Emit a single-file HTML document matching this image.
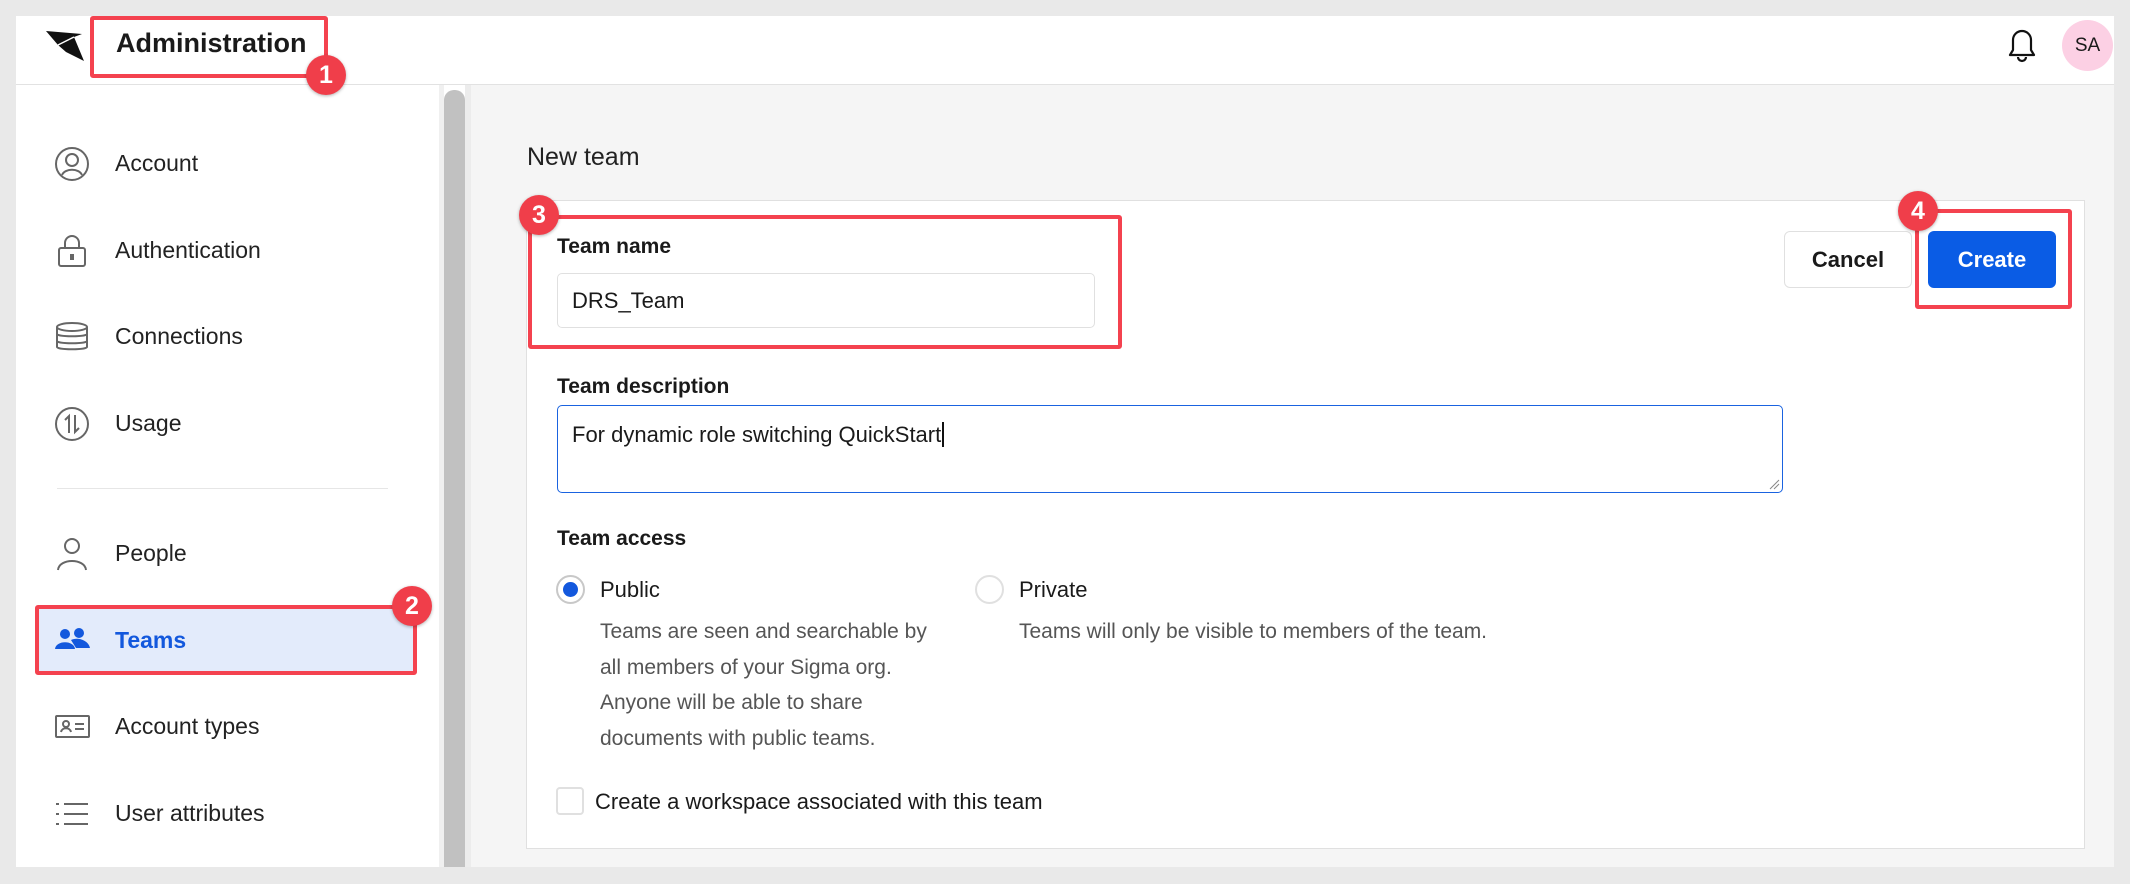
<!DOCTYPE html>
<html><head><meta charset="utf-8"><style>
*{box-sizing:border-box;margin:0;padding:0}
body{width:2130px;height:884px;background:#e9e9e9;font-family:"Liberation Sans",sans-serif;color:#1a1a1a;position:relative;overflow:hidden}
.abs{position:absolute}
.panel{left:16px;top:16px;width:2098px;height:851px;background:#fff}
.hdr{left:16px;top:16px;width:2098px;height:69px;border-bottom:1px solid #e2e2e2;background:#fff}
.side{left:16px;top:85px;width:423px;height:782px;background:#fff}
.content{left:465px;top:85px;width:1649px;height:782px;background:#f5f5f5;border-left:6px solid #ececec}
.item{left:115px;font-size:23px;color:#222}
.ic{left:54px;width:36px;height:36px}
.red{border:4px solid #f4424f;border-radius:3px;z-index:5}
.badge{width:40px;height:40px;border-radius:50%;background:#f03e4a;color:#fff;font-weight:bold;font-size:25px;text-align:center;line-height:40px;box-shadow:0 1px 3px rgba(0,0,0,.3);z-index:6}
.card{left:526px;top:200px;width:1559px;height:649px;background:#fff;border:1px solid #e0e0e0}
.lbl{font-weight:bold;font-size:21px;color:#1a1a1a}
.t22{font-size:22px}
.desc{font-size:21px;color:#555;line-height:35.5px}
</style></head><body>
<div class="abs panel"></div>
<div class="abs hdr"></div>
<svg class="abs" style="left:44px;top:28px" width="42" height="36" viewBox="0 0 42 36"><path d="M2 3 L38 6 L30 9 L40 33 L22 24 L14 17 Z" fill="#111"/><path d="M14 17 L30 9" stroke="#fff" stroke-width="1.5"/></svg>
<div class="abs" style="left:116px;top:28px;font-size:27px;font-weight:bold">Administration</div>
<div class="abs red" style="left:90px;top:16px;width:238px;height:62px"></div>
<div class="abs badge" style="left:306px;top:55px">1</div>
<svg class="abs" style="left:2000px;top:22px" width="44" height="44" viewBox="0 0 44 44"><path d="M10 33 L34 33 L31 28 L31 18 A9 9 0 0 0 13 18 L13 28 Z" fill="none" stroke="#111" stroke-width="2.2" stroke-linejoin="round"/><path d="M18 35 A4 4 0 0 0 26 35" fill="none" stroke="#111" stroke-width="2.2"/></svg>
<div class="abs" style="left:2062px;top:20px;width:51px;height:51px;border-radius:50%;background:#fcd0e4;font-size:19px;text-align:center;line-height:51px">SA</div>

<div class="abs side"></div>
<div class="abs" style="left:444px;top:90px;width:21px;height:777px;background:#c1c1c1;border-radius:10px 10px 0 0"></div>
<div class="abs" style="left:439px;top:85px;width:5px;height:782px;background:#f0f0f0"></div>

<svg class="abs ic" style="top:146px" viewBox="0 0 36 36" fill="none" stroke="#666" stroke-width="2"><circle cx="18" cy="18" r="16"/><circle cx="18" cy="14" r="6"/><path d="M8 29 C11 22 25 22 28 29"/></svg>
<div class="abs item" style="top:150px">Account</div>
<svg class="abs ic" style="top:232px" viewBox="0 0 36 36" fill="none" stroke="#666" stroke-width="2"><rect x="5" y="16" width="26" height="18" rx="2"/><path d="M11 16 V11 A7 7 0 0 1 25 11 V16"/><rect x="17" y="23" width="2" height="4" fill="#666"/></svg>
<div class="abs item" style="top:237px">Authentication</div>
<svg class="abs ic" style="top:319px" viewBox="0 0 36 36" fill="none" stroke="#666" stroke-width="2"><ellipse cx="18" cy="8" rx="15" ry="4"/><path d="M3 8 V28 C3 31 33 31 33 28 V8 M3 15 C3 18 33 18 33 15 M3 22 C3 25 33 25 33 22"/></svg>
<div class="abs item" style="top:323px">Connections</div>
<svg class="abs ic" style="top:406px" viewBox="0 0 36 36" fill="none" stroke="#666" stroke-width="2"><circle cx="18" cy="18" r="16"/><path d="M15 27 V10 L11 14 M21 9 V26 L25 22"/></svg>
<div class="abs item" style="top:410px">Usage</div>
<div class="abs" style="left:57px;top:488px;width:331px;height:1px;background:#e6e6e6"></div>
<svg class="abs ic" style="top:536px" viewBox="0 0 36 36" fill="none" stroke="#666" stroke-width="2"><circle cx="18" cy="10" r="7"/><path d="M4 34 C5 22 31 22 32 34"/></svg>
<div class="abs item" style="top:540px">People</div>
<div class="abs" style="left:37px;top:607px;width:377px;height:65px;background:#e3ebfb"></div>
<svg class="abs ic" style="top:622px" viewBox="0 0 36 36" fill="#1358dd"><circle cx="11" cy="12" r="5"/><path d="M1 27 C2 18 20 18 21 27 Z"/><circle cx="25" cy="11" r="5"/><path d="M17 18 C22 15 34 17 36 26 L22 26 Z"/></svg>
<div class="abs item" style="top:627px;color:#1358dd;font-weight:bold">Teams</div>
<div class="abs red" style="left:35px;top:605px;width:382px;height:70px"></div>
<div class="abs badge" style="left:392px;top:586px">2</div>
<svg class="abs ic" style="top:709px" viewBox="0 0 36 36" fill="none" stroke="#666" stroke-width="2"><rect x="2" y="7" width="33" height="21" rx="1"/><circle cx="12" cy="15" r="3"/><path d="M7 23 C8 18 16 18 17 23 M21 15 H30 M21 20 H30"/></svg>
<div class="abs item" style="top:713px">Account types</div>
<svg class="abs ic" style="top:796px" viewBox="0 0 36 36" fill="none" stroke="#666" stroke-width="2"><path d="M2 8 H5 M10 8 H34 M2 18 H5 M10 18 H34 M2 28 H5 M10 28 H34"/></svg>
<div class="abs item" style="top:800px">User attributes</div>

<div class="abs content"></div>
<div class="abs" style="left:527px;top:143px;font-size:25px;color:#222">New team</div>
<div class="abs card"></div>

<div class="abs lbl" style="left:557px;top:235px">Team name</div>
<div class="abs" style="left:557px;top:273px;width:538px;height:55px;border:1px solid #e0e0e0;border-radius:5px"></div>
<div class="abs t22" style="left:572px;top:288px">DRS_Team</div>
<div class="abs red" style="left:528px;top:215px;width:594px;height:134px"></div>
<div class="abs badge" style="left:519px;top:195px">3</div>

<div class="abs" style="left:1784px;top:231px;width:128px;height:57px;border:1px solid #e0e0e0;border-radius:6px;text-align:center;line-height:55px;font-size:22px;font-weight:bold">Cancel</div>
<div class="abs" style="left:1928px;top:231px;width:128px;height:57px;background:#0a5ce5;border-radius:6px;text-align:center;line-height:57px;font-size:22px;font-weight:bold;color:#fff">Create</div>
<div class="abs red" style="left:1915px;top:209px;width:157px;height:100px"></div>
<div class="abs badge" style="left:1898px;top:191px">4</div>

<div class="abs lbl" style="left:557px;top:375px">Team description</div>
<div class="abs" style="left:557px;top:405px;width:1226px;height:88px;border:1.5px solid #1a63e0;border-radius:5px"></div>
<div class="abs t22" style="left:572px;top:422px">For dynamic role switching QuickStart<span style="border-left:2px solid #111;margin-left:1px"></span></div>
<svg class="abs" style="left:1768px;top:478px" width="12" height="12"><path d="M2 11 L11 2 M6 11 L11 6" stroke="#888" stroke-width="1"/></svg>

<div class="abs lbl" style="left:557px;top:527px">Team access</div>
<div class="abs" style="left:556px;top:575px;width:29px;height:29px;border-radius:50%;border:2px solid #c8c8c8;background:#fff"></div>
<div class="abs" style="left:563px;top:582px;width:15px;height:15px;border-radius:50%;background:#1358dd"></div>
<div class="abs t22" style="left:600px;top:577px">Public</div>
<div class="abs desc" style="left:600px;top:614px">Teams are seen and searchable by<br>all members of your Sigma org.<br>Anyone will be able to share<br>documents with public teams.</div>
<div class="abs" style="left:975px;top:575px;width:29px;height:29px;border-radius:50%;border:2px solid #e0e0e0;background:#fff"></div>
<div class="abs t22" style="left:1019px;top:577px">Private</div>
<div class="abs desc" style="left:1019px;top:614px">Teams will only be visible to members of the team.</div>
<div class="abs" style="left:556px;top:787px;width:28px;height:28px;border:2px solid #e0e0e0;border-radius:4px"></div>
<div class="abs t22" style="left:595px;top:789px">Create a workspace associated with this team</div>
</body></html>
